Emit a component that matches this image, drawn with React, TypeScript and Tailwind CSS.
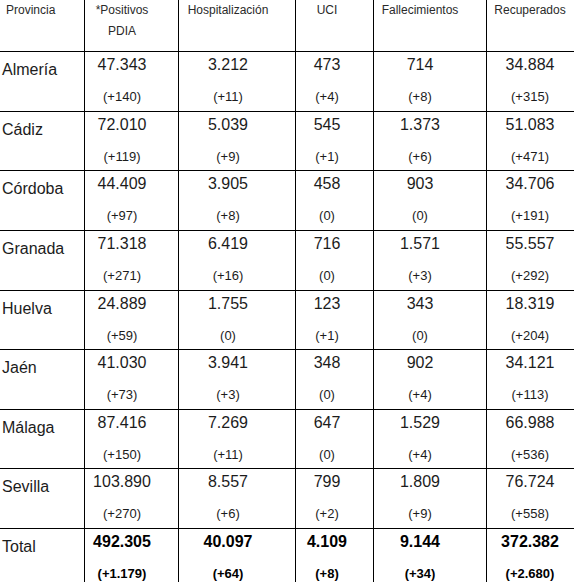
const headers = [
  { lines: ['*Positivos', 'PDIA'], pad: 'pr-[19px]' },
  { lines: ['Hospitalización'], pad: 'pr-[18px]' },
  { lines: ['UCI'], pad: 'pr-[15px]' },
  { lines: ['Fallecimientos'], pad: 'pr-[20px]' },
  { lines: ['Recuperados'], pad: 'pr-[1px]' },
];

// widths incl. the right border line
const colClass = [
  'w-[85px] shrink-0 border-r border-black',
  'w-[94px] shrink-0 border-r border-black',
  'w-[117px] shrink-0 border-r border-black',
  'w-[78px] shrink-0 border-r border-black',
  'w-[113px] shrink-0 border-r border-black',
  'flex-1 min-w-0',
];

type Row = { name: string; h: string; cells: [string, string][] };

const rows: Row[] = [
  { name: 'Almería', h: 'h-[60px]', cells: [['47.343', '(+140)'], ['3.212', '(+11)'], ['473', '(+4)'], ['714', '(+8)'], ['34.884', '(+315)']] },
  { name: 'Cádiz', h: 'h-[59px]', cells: [['72.010', '(+119)'], ['5.039', '(+9)'], ['545', '(+1)'], ['1.373', '(+6)'], ['51.083', '(+471)']] },
  { name: 'Córdoba', h: 'h-[60px]', cells: [['44.409', '(+97)'], ['3.905', '(+8)'], ['458', '(0)'], ['903', '(0)'], ['34.706', '(+191)']] },
  { name: 'Granada', h: 'h-[60px]', cells: [['71.318', '(+271)'], ['6.419', '(+16)'], ['716', '(0)'], ['1.571', '(+3)'], ['55.557', '(+292)']] },
  { name: 'Huelva', h: 'h-[59px]', cells: [['24.889', '(+59)'], ['1.755', '(0)'], ['123', '(+1)'], ['343', '(0)'], ['18.319', '(+204)']] },
  { name: 'Jaén', h: 'h-[60px]', cells: [['41.030', '(+73)'], ['3.941', '(+3)'], ['348', '(0)'], ['902', '(+4)'], ['34.121', '(+113)']] },
  { name: 'Málaga', h: 'h-[59px]', cells: [['87.416', '(+150)'], ['7.269', '(+11)'], ['647', '(0)'], ['1.529', '(+4)'], ['66.988', '(+536)']] },
  { name: 'Sevilla', h: 'h-[60px]', cells: [['103.890', '(+270)'], ['8.557', '(+6)'], ['799', '(+2)'], ['1.809', '(+9)'], ['76.724', '(+558)']] },
];

const total: [string, string][] = [
  ['492.305', '(+1.179)'],
  ['40.097', '(+64)'],
  ['4.109', '(+8)'],
  ['9.144', '(+34)'],
  ['372.382', '(+2.680)'],
];

function DataCell({ value, diff, col, bold }: { value: string; diff: string; col: number; bold?: boolean }) {
  return (
    <div className={`${colClass[col + 1]} ${headers[col].pad} flex flex-col items-center text-[#1c1c1c]`}>
      <span className={`text-[16px] leading-[26px] ${bold ? 'font-bold text-black' : ''}`}>{value}</span>
      <span className={`mt-[1px] text-[13px] leading-[36px] ${bold ? 'font-bold text-black' : ''}`}>{diff}</span>
    </div>
  );
}

export default function App() {
  return (
    <div className="h-[582px] w-[574px] overflow-hidden bg-white font-['Liberation_Sans',Arial,sans-serif]">
      <div className="flex h-[52px] border-b border-black text-[12px] leading-[21px] text-[#2a2a2a]">
        <div className={`${colClass[0]} pl-[6px]`}>Provincia</div>
        {headers.map((h, i) => (
          <div key={i} className={`${colClass[i + 1]} ${h.pad} flex flex-col items-center`}>
            {h.lines.map((l) => (
              <span key={l} className="whitespace-nowrap">{l}</span>
            ))}
          </div>
        ))}
      </div>

      {rows.map((r) => (
        <div key={r.name} className={`flex ${r.h} border-b border-black`}>
          <div className={`${colClass[0]} pl-[2px] text-[16px] leading-[36px] text-[#1c1c1c]`}>{r.name}</div>
          {r.cells.map(([v, d], i) => (
            <DataCell key={i} value={v} diff={d} col={i} />
          ))}
        </div>
      ))}

      <div className="flex h-[60px]">
        <div className={`${colClass[0]} pl-[2px] text-[16px] leading-[36px] text-[#1c1c1c]`}>Total</div>
        {total.map(([v, d], i) => (
          <DataCell key={i} value={v} diff={d} col={i} bold />
        ))}
      </div>
    </div>
  );
}
